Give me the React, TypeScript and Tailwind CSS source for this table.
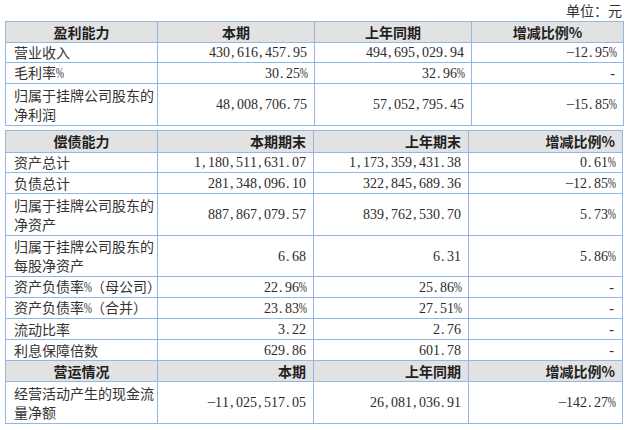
const CJK = "font-['Noto_Sans_CJK_SC',sans-serif]";

type Row = {
  h: number;
  cells: string[];
  head?: boolean;
  align?: 'center' | 'right';
};

const T1: Row[] = [
  { h: 21, head: true, align: 'center', cells: ['盈利能力', '本期', '上年同期', '增减比例%'] },
  { h: 20, cells: ['营业收入', '430,616,457.95', '494,695,029.94', '−12.95%'] },
  { h: 21, cells: ['毛利率%', '30.25%', '32.96%', '-'] },
  { h: 42, cells: ['归属于挂牌公司股东的\n净利润', '48,008,706.75', '57,052,795.45', '−15.85%'] },
];

const T2: Row[] = [
  { h: 22, head: true, align: 'right', cells: ['偿债能力', '本期期末', '上年期末', '增减比例%'] },
  { h: 20, cells: ['资产总计', '1,180,511,631.07', '1,173,359,431.38', '0.61%'] },
  { h: 21, cells: ['负债总计', '281,348,096.10', '322,845,689.36', '−12.85%'] },
  { h: 42, cells: ['归属于挂牌公司股东的\n净资产', '887,867,079.57', '839,762,530.70', '5.73%'] },
  { h: 41, cells: ['归属于挂牌公司股东的\n每股净资产', '6.68', '6.31', '5.86%'] },
  { h: 21, cells: ['资产负债率%（母公司）', '22.96%', '25.86%', '-'] },
  { h: 21, cells: ['资产负债率%（合并）', '23.83%', '27.51%', '-'] },
  { h: 21, cells: ['流动比率', '3.22', '2.76', '-'] },
  { h: 21, cells: ['利息保障倍数', '629.86', '601.78', '-'] },
  { h: 21, head: true, align: 'right', cells: ['营运情况', '本期', '上年同期', '增减比例%'] },
  { h: 42, cells: ['经营活动产生的现金流\n量净额', '−11,025,517.05', '26,081,036.91', '−142.27%'] },
];

function Pct() {
  return (
    <span className="inline-flex w-[7px] justify-center font-['Liberation_Serif',serif]">
      <span className="inline-block scale-x-[0.7]">%</span>
    </span>
  );
}

function Num({ v }: { v: string }) {
  return (
    <span className="inline-flex font-['Liberation_Serif',serif] text-[14px] text-[#2b2b2b]">
      {v.split('').map((c, i) =>
        c === '%' ? (
          <Pct key={i} />
        ) : (
          <span
            key={i}
            className={
              c === ',' || c === '.'
                ? 'flex w-[7px] justify-start pl-[1px]'
                : c === '−'
                  ? 'flex w-[7px] justify-center scale-x-[1.15]'
                  : 'flex w-[7px] justify-center'
            }
          >
            {c}
          </span>
        )
      )}
    </span>
  );
}

function Label({ text }: { text: string }) {
  return (
    <span className="whitespace-pre">
      {text.split('\n').map((line, li) => (
        <span key={li} className="block">
          {line.split('%').map((part, pi) => (
            <span key={pi}>
              {pi > 0 && <Pct />}
              {part}
            </span>
          ))}
        </span>
      ))}
    </span>
  );
}

function Table({ rows, cols }: { rows: Row[]; cols: string }) {
  return (
    <div className={`grid ${cols} border-l border-t border-[#92b7e4]`}>
      {rows.map((r, ri) =>
        r.cells.map((c, ci) => {
          const base = 'border-r border-b border-[#92b7e4] flex items-center';
          if (r.head) {
            const j = ci === 0 || r.align === 'center' ? 'justify-center' : 'justify-end pr-[7px]';
            return (
              <div
                key={`${ri}-${ci}`}
                style={{ height: r.h }}
                className={`${base} ${j} bg-[#e2e2e2] ${CJK} text-[14px] font-bold text-[#1f1f1f]`}
              >
                {c}
              </div>
            );
          }
          if (ci === 0) {
            return (
              <div
                key={`${ri}-${ci}`}
                style={{ height: r.h }}
                className={`${base} pl-[8px] ${CJK} text-[14px] leading-[19px] text-[#333]`}
              >
                <Label text={c} />
              </div>
            );
          }
          return (
            <div key={`${ri}-${ci}`} style={{ height: r.h }} className={`${base} justify-end pr-[7px]`}>
              <Num v={c} />
            </div>
          );
        })
      )}
    </div>
  );
}

export default function App() {
  return (
    <div className="w-[628px] h-[430px] bg-white overflow-hidden">
      <div className={`h-[21px] flex items-center justify-end pr-[6px] ${CJK} text-[14px] text-[#333]`}>
        单位：元
      </div>
      <div className="ml-[5px]">
        <Table rows={T1} cols="grid-cols-[152px_157px_157px_152px] w-[619px]" />
        <div className="h-[4px]" />
        <Table rows={T2} cols="grid-cols-[152px_156px_155px_154px] w-[618px]" />
      </div>
    </div>
  );
}
